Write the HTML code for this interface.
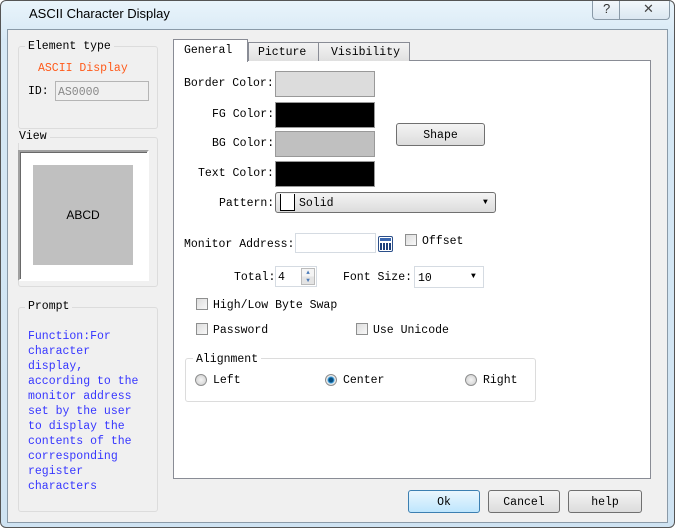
<!DOCTYPE html>
<html><head><style>
*{box-sizing:border-box;margin:0;padding:0}
body{width:675px;height:528px;overflow:hidden;background:#fff;font-family:"Liberation Mono",monospace;font-size:11.5px;color:#000;position:relative}
.a{position:absolute;white-space:nowrap}
.t{position:absolute;white-space:nowrap;margin-top:1px}
.win{left:0;top:0;width:675px;height:528px;border:1px solid #555;border-radius:6px;background:linear-gradient(#e9f4fb,#d6e8f5 40px,#cfe3f2);}
.body{left:7px;top:29px;width:661px;height:494px;background:#f0f0f0;border:1px solid #8a9aa8}
.grp{border:1px solid #dcdcdc;border-radius:3px;background:#f0f0f0}
.lbl{background:#f0f0f0;padding:0 3px}
.btn{border:1px solid #707070;border-radius:3px;background:linear-gradient(#f4f4f4,#dcdcdc);text-align:center}
.cb{width:12px;height:12px;border:1px solid #8e8f8f;background:linear-gradient(135deg,#ddd,#f8f8f8)}
.rb{width:12px;height:12px;border:1px solid #8e8f8f;border-radius:50%;background:radial-gradient(#f4f4f4,#ccc)}
</style></head><body>
<div class="a win"></div>
<div class="a" style="left:29px;top:6px;font-family:'Liberation Sans',sans-serif;font-size:13px">ASCII Character Display</div>
<div class="a" style="left:592px;top:1px;width:78px;height:19px;border:1px solid #8a9aa8;border-top:none;border-radius:0 0 4px 4px;background:linear-gradient(#f2f7fb,#dbe7f1)"></div>
<div class="a" style="left:619px;top:1px;width:1px;height:18px;background:#8a9aa8"></div>
<div class="a" style="left:603px;top:1px;font-family:'Liberation Sans';font-size:13px;color:#333">?</div>
<div class="a" style="left:643px;top:1px;font-family:'Liberation Sans';font-size:13px;color:#444">✕</div>
<div class="a body"></div>

<div class="a grp" style="left:18px;top:46px;width:140px;height:83px"></div>
<div class="t lbl" style="left:25px;top:39px">Element type</div>
<div class="t" style="left:38px;top:61px;color:#ff5a1a">ASCII Display</div>
<div class="t" style="left:28px;top:84px">ID:</div>
<div class="a" style="left:55px;top:81px;width:94px;height:20px;border:1px solid #b5b5b5;background:#f0f0f0;color:#888;padding:4px 2px">AS0000</div>

<div class="a grp" style="left:18px;top:137px;width:140px;height:150px"></div>
<div class="t lbl" style="left:16px;top:129px">View</div>
<div class="a" style="left:18px;top:150px;width:131px;height:131px;border:2px solid;border-color:#a0a0a0 #fff #fff #a0a0a0;background:#fff;box-shadow:inset 1px 1px 0 #696969"></div>
<div class="a" style="left:33px;top:165px;width:100px;height:100px;background:#c0c0c0;font-family:'Liberation Sans';font-size:12px;text-align:center;line-height:100px">ABCD</div>

<div class="a grp" style="left:18px;top:307px;width:140px;height:205px"></div>
<div class="t lbl" style="left:25px;top:299px">Prompt</div>
<div class="t" style="left:28px;top:328px;color:#3636ff;line-height:15px;white-space:pre">Function:For
character
display,
according to the
monitor address
set by the user
to display the
contents of the
corresponding
register
characters</div>

<div class="a" style="left:173px;top:60px;width:478px;height:419px;background:#fff;border:1px solid #898c95"></div>
<div class="a" style="left:248px;top:42px;width:71px;height:19px;border:1px solid #898c95;border-bottom:none;background:linear-gradient(#f3f3f3,#e0e0e0);padding:3px 0 0 9px">Picture</div>
<div class="a" style="left:318px;top:42px;width:92px;height:19px;border:1px solid #898c95;border-bottom:none;background:linear-gradient(#f3f3f3,#e0e0e0);padding:3px 0 0 12px">Visibility</div>
<div class="a" style="left:173px;top:39px;width:75px;height:23px;border:1px solid #898c95;border-bottom:none;background:#fff;padding:4px 0 0 10px">General</div>

<div class="t" style="left:184px;top:76px">Border Color:</div>
<div class="a" style="left:275px;top:71px;width:100px;height:26px;border:1px solid #999;background:#dcdcdc"></div>
<div class="t" style="left:212px;top:107px">FG Color:</div>
<div class="a" style="left:275px;top:102px;width:100px;height:26px;border:1px solid #999;background:#000"></div>
<div class="t" style="left:212px;top:136px">BG Color:</div>
<div class="a" style="left:275px;top:131px;width:100px;height:26px;border:1px solid #999;background:#c0c0c0"></div>
<div class="t" style="left:198px;top:166px">Text Color:</div>
<div class="a" style="left:275px;top:161px;width:100px;height:26px;border:1px solid #999;background:#000"></div>
<div class="a btn" style="left:396px;top:123px;width:89px;height:23px;padding-top:5px">Shape</div>

<div class="t" style="left:219px;top:196px">Pattern:</div>
<div class="a" style="left:275px;top:192px;width:221px;height:21px;border:1px solid #707070;border-radius:3px;background:linear-gradient(#f4f4f4,#dcdcdc)"></div>
<div class="a" style="left:280px;top:194px;width:15px;height:17px;border:1px solid #000;border-top:none;background:#fff"></div>
<div class="t" style="left:299px;top:196px">Solid</div>
<div class="a" style="left:483px;top:198px;font-size:8px">▼</div>

<div class="t" style="left:184px;top:237px">Monitor Address:</div>
<div class="a" style="left:295px;top:233px;width:81px;height:20px;border:1px solid #d5dbe2;background:#fff"></div>
<div class="a" style="left:378px;top:236px;width:15px;height:16px;border:1px solid #2b4f8a;border-radius:2px;background:#fff"></div>
<div class="a" style="left:380px;top:238px;width:11px;height:3px;background:#3a67b0"></div>
<div class="a" style="left:380px;top:243px;width:11px;height:7px;background:repeating-linear-gradient(90deg,#1d3f7a 0 2px,#fff 2px 3px)"></div>
<div class="a cb" style="left:405px;top:234px"></div>
<div class="t" style="left:422px;top:234px">Offset</div>

<div class="t" style="left:234px;top:270px">Total:</div>
<div class="a" style="left:275px;top:266px;width:42px;height:21px;border:1px solid #d5dbe2;background:#fff;padding:4px 2px">4</div>
<div class="a" style="left:301px;top:268px;width:14px;height:17px;border:1px solid #bbb;background:linear-gradient(#f4f4f4 50%,#e4e4e4 50%);font-size:6px;color:#4a7ab8;text-align:center;line-height:8px">▲<br>▼</div>
<div class="t" style="left:343px;top:270px">Font Size:</div>
<div class="a" style="left:414px;top:266px;width:70px;height:22px;border:1px solid #d5dbe2;background:#fff;padding:5px 3px">10</div>
<div class="a" style="left:471px;top:272px;font-size:8px">▼</div>

<div class="a cb" style="left:196px;top:298px"></div>
<div class="t" style="left:213px;top:298px">High/Low Byte Swap</div>
<div class="a cb" style="left:196px;top:323px"></div>
<div class="t" style="left:213px;top:323px">Password</div>
<div class="a cb" style="left:356px;top:323px"></div>
<div class="t" style="left:373px;top:323px">Use Unicode</div>

<div class="a" style="left:185px;top:358px;width:351px;height:44px;border:1px solid #dcdcdc;border-radius:3px"></div>
<div class="t lbl" style="left:193px;top:352px;background:#fff">Alignment</div>
<div class="a rb" style="left:195px;top:374px"></div>
<div class="t" style="left:213px;top:373px">Left</div>
<div class="a rb" style="left:325px;top:374px;background:radial-gradient(#0a4f80 0 2px,#3aa0e0 3px,#eee 4px,#ccc)"></div>
<div class="t" style="left:343px;top:373px">Center</div>
<div class="a rb" style="left:465px;top:374px"></div>
<div class="t" style="left:483px;top:373px">Right</div>

<div class="a btn" style="left:408px;top:490px;width:72px;height:23px;padding-top:5px;border-color:#3c7fb1;background:linear-gradient(#eaf6fd,#bee6fd)">Ok</div>
<div class="a btn" style="left:488px;top:490px;width:72px;height:23px;padding-top:5px">Cancel</div>
<div class="a btn" style="left:568px;top:490px;width:74px;height:23px;padding-top:5px">help</div>
</body></html>
